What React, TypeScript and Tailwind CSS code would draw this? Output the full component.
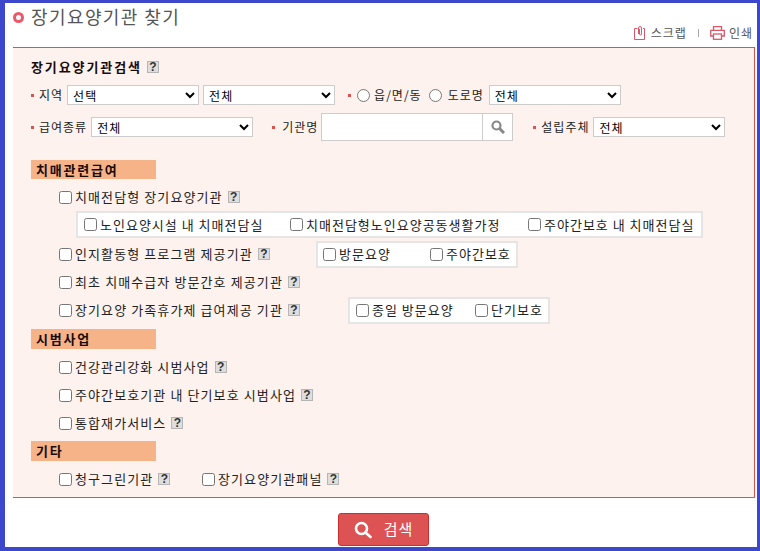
import React from "react";

function Help({ className = "" }: { className?: string }) {
  return (
    <span className={"ml-[5px] inline-flex h-[12px] w-[12px] shrink-0 items-center justify-center border border-[#b5b5b5] bg-[#dedede] text-[12px] font-bold leading-none tracking-normal text-[#333] font-['Liberation_Sans'] " + className}>
      ?
    </span>
  );
}

function Dot({ className = "" }: { className?: string }) {
  return <span className={"mr-[5px] inline-block h-[3px] w-[3px] shrink-0 bg-[#d9534f] " + className} />;
}

function Check({ label, help, className = "" }: { label: string; help?: boolean; className?: string }) {
  return (
    <label className={"flex shrink-0 items-center " + className}>
      <input type="checkbox" className="m-0 mr-[3px] h-[13px] w-[13px] shrink-0" />
      <span className="whitespace-nowrap">{label}</span>
      {help && <Help />}
    </label>
  );
}

function Section({ title, className = "" }: { title: string; className?: string }) {
  return (
    <div className={"flex h-[19px] w-[125px] items-center bg-[#f5b387] pl-[5px] text-[13px] font-bold tracking-[1.8px] text-[#1a0a0a] " + className}>
      {title}
    </div>
  );
}

function SubBox({ children, className = "" }: { children: React.ReactNode; className?: string }) {
  return <div className={"flex h-[27px] items-center border-[2px] border-[#e5e5e5] bg-white tracking-[1px] " + className}>{children}</div>;
}

const sel = "h-[20px] border border-[#ccc] bg-white py-0 pl-[1px] text-[12px] tracking-[1px] text-black outline-none";

function Row({ children, className = "" }: { children: React.ReactNode; className?: string }) {
  return <div className={"flex h-[28px] items-center pl-[28px] tracking-[1.1px] " + className}>{children}</div>;
}

export default function App() {
  return (
    <div className="h-[551px] w-[760px] overflow-hidden border-t-[3px] border-r-[3px] border-b-[4px] border-l-[5px] border-[#3d47cc] bg-white font-['Noto_Sans_CJK_KR','Noto_Sans',sans-serif] text-[13px] tracking-[1px] text-[#222]">
      <div className="flex h-[21px] items-center pl-[8px] pt-[4px]">
        <span className="mr-[7px] mt-[3px] h-[11px] w-[11px] rounded-full border-[3px] border-[#e8596a] bg-white" />
        <h1 className="text-[18px] font-normal leading-none tracking-[1.4px] text-[#555]">장기요양기관 찾기</h1>
      </div>
      <div className="flex h-[23px] items-start justify-end pr-[4px] text-[12px] leading-none text-[#555]">
        <div className="mt-[2px] flex items-center">
          <svg width="12" height="14" viewBox="0 0 12 14" fill="none" stroke="#d9596a" strokeWidth="1" className="mr-[5px]">
            <path d="M3.5 2.5H.5v11h10v-11H9" />
            <path d="M4.5 8V2a1.5 1.5 0 0 1 3 0v6a1 1 0 0 1-2 0V3" />
          </svg>
          <span>스크랩</span>
          <span className="mx-[11px] h-[8px] w-px bg-[#aaa]" />
          <svg width="15" height="14" viewBox="0 0 15 14" fill="none" stroke="#d9596a" strokeWidth="1.3" className="mr-[4px]">
            <path d="M3.5 4V.7h8V4" />
            <path d="M3.5 10H.7V4.3h13.6V10h-2.8" />
            <rect x="3.5" y="8" width="8" height="5.3" />
          </svg>
          <span>인쇄</span>
        </div>
      </div>
      <div className="ml-[8px] h-[451px] w-[742px] border-t border-r border-b border-[#d9534f] bg-[#fdf2ed] pl-[18px]">
        <div className="flex h-[37px] items-center text-[13px] font-bold tracking-[1.9px] text-[#1a0a0a]">
          장기요양기관검색
          <Help className="ml-[4px]" />
        </div>
        <div className="flex h-[20px] items-center text-[12px]">
          <Dot />
          <span className="mr-[4px]">지역</span>
          <select className={sel + " w-[132px]"} defaultValue="선택"><option>선택</option></select>
          <select className={sel + " ml-[4px] w-[132px]"} defaultValue="전체"><option>전체</option></select>
          <Dot className="ml-[13px]" />
          <input type="radio" name="a" className="m-0 ml-[1px] mr-[4px] h-[13px] w-[13px]" />
          <span className="mr-[7px]">읍/면/동</span>
          <input type="radio" name="a" className="m-0 mr-[6px] h-[13px] w-[13px]" />
          <span className="mr-[5px]">도로명</span>
          <select className={sel + " w-[132px]"} defaultValue="전체"><option>전체</option></select>
        </div>
        <div className="mt-[8px] flex h-[28px] items-center text-[12px]">
          <Dot />
          <span className="mr-[4px]">급여종류</span>
          <select className={sel + " h-[18px] w-[162px]"} defaultValue="전체"><option>전체</option></select>
          <Dot className="ml-[19px] mr-[7px]" />
          <span className="mr-[3px]">기관명</span>
          <input type="text" className="h-[28px] w-[162px] border border-[#ccc] bg-white outline-none" />
          <button className="flex h-[28px] w-[30px] items-center justify-center border border-l-0 border-[#ccc] bg-white">
            <svg width="14" height="14" viewBox="0 0 14 14" fill="none" stroke="#888" strokeWidth="2.2">
              <circle cx="5.5" cy="5.5" r="4" />
              <path d="M8.5 8.5 13 13" strokeWidth="3" />
            </svg>
          </button>
          <Dot className="ml-[20px]" />
          <span className="mr-[4px]">설립주체</span>
          <select className={sel + " w-[132px]"} defaultValue="전체"><option>전체</option></select>
        </div>

        <Section title="치매관련급여" className="mt-[19px]" />
        <div className="mt-[4px]">
          <Row><Check label="치매전담형 장기요양기관" help /></Row>
          <SubBox className="ml-[45px] w-[627px] pl-[6px]">
            <Check label="노인요양시설 내 치매전담실" className="w-[206px]" />
            <Check label="치매전담형노인요양공동생활가정" className="w-[238px]" />
            <Check label="주야간보호 내 치매전담실" />
          </SubBox>
          <Row className="mt-[2px] h-[28px]">
            <Check label="인지활동형 프로그램 제공기관" help className="w-[209px]" />
            <SubBox className="ml-[48px] w-[202px] pl-[5px]">
              <Check label="방문요양" className="w-[107px]" />
              <Check label="주야간보호" />
            </SubBox>
          </Row>
          <Row><Check label="최초 치매수급자 방문간호 제공기관" help /></Row>
          <Row>
            <Check label="장기요양 가족휴가제 급여제공 기관" help className="w-[241px]" />
            <SubBox className="ml-[48px] w-[202px] pl-[6px]">
              <Check label="종일 방문요양" className="w-[119px]" />
              <Check label="단기보호" />
            </SubBox>
          </Row>
        </div>
        <Section title="시범사업" className="mt-[5px] h-[20px]" />
        <div className="mt-[4px]">
          <Row><Check label="건강관리강화 시범사업" help /></Row>
          <Row><Check label="주야간보호기관 내 단기보호 시범사업" help /></Row>
          <Row><Check label="통합재가서비스" help /></Row>
        </div>
        <Section title="기타" className="mt-[4px] h-[20px]" />
        <div className="mt-[4px]">
          <Row>
            <Check label="청구그린기관" help className="w-[111px]" />
            <Check label="장기요양기관패널" help className="ml-[32px]" />
          </Row>
        </div>
      </div>
      <div className="mt-[15px] flex justify-center pl-[5px]">
        <button className="flex h-[33px] w-[91px] items-center justify-center rounded-[3px] border border-[#c9302c] bg-[#dd5353] text-[15px] text-white">
          <svg width="18" height="18" viewBox="0 0 18 18" fill="none" stroke="white" strokeWidth="2.6" className="mr-[12px]">
            <circle cx="7.5" cy="7.5" r="5.5" />
            <path d="M11.5 11.5 16.5 16" strokeLinecap="round" />
          </svg>
          검색
        </button>
      </div>
    </div>
  );
}
